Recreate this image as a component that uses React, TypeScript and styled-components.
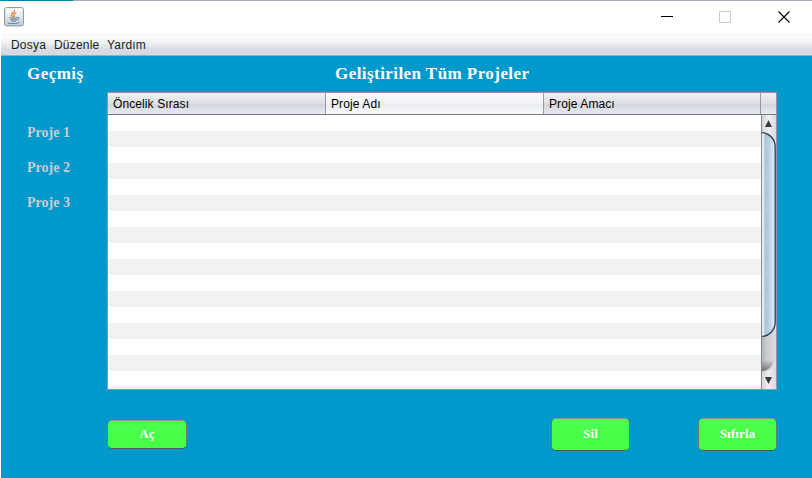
import React from 'react';
import styled, { createGlobalStyle } from 'styled-components';

const GlobalStyle = createGlobalStyle`
  * { box-sizing: border-box; }
  body { margin: 0; overflow: hidden; }
`;

const Window = styled.div`
  width: 812px;
  height: 478px;
  display: flex;
  flex-direction: column;
  background: #fff;
  font-family: "Liberation Sans", Arial, sans-serif;
`;

const TopEdge = styled.div`
  height: 1px;
  flex: none;
  background: linear-gradient(to right, #0080ad 73px, #a3adbc 73px);
`;

const TitleBar = styled.header`
  height: 32px;
  flex: none;
  display: flex;
  align-items: flex-start;
  justify-content: space-between;
  padding: 6px 21px 0 4px;
`;

const Controls = styled.div`
  display: flex;
  gap: 46px;
  padding-top: 4px;
`;

const MenuBar = styled.nav`
  height: 23px;
  flex: none;
  display: flex;
  gap: 8px;
  margin-left: 1px;
  padding-left: 10px;
  border-bottom: 1px solid #a1a9b5;
  background: linear-gradient(#f9f9fa, #fafafa 25%, #ebedf0 50%, #d9dbe2 72%, #d6d9df);
`;

const MenuItem = styled.span<{ $width: number }>`
  width: ${(p) => p.$width}px;
  font-size: 12px;
  line-height: 24px;
  letter-spacing: 0.2px;
  white-space: nowrap;
  color: #1c1c20;
`;

const Content = styled.main`
  flex: 1;
  margin-left: 1px;
  display: grid;
  grid-template-columns: 80px 670px;
  column-gap: 0;
  padding-left: 26px;
  background: #0099cc;
`;

const Sidebar = styled.aside`
  display: flex;
  flex-direction: column;
  font-family: "Liberation Serif", "Times New Roman", serif;
  font-weight: bold;
`;

const Heading = styled.h1`
  margin: 0;
  padding-top: 7px;
  height: 36px;
  font: bold 17px/21px "Liberation Serif", "Times New Roman", serif;
  letter-spacing: 0.44px;
  color: #fff;
  white-space: nowrap;
`;

const TableHeading = styled(Heading)`
  padding-left: 228px;
`;

const History = styled.ul`
  list-style: none;
  margin: 31px 0 0;
  padding: 0;
`;

const HistoryItem = styled.li`
  height: 35px;
  font-size: 14px;
  line-height: 20px;
  color: #cccccc;
`;

const Table = styled.section`
  width: 670px;
  height: 298px;
  border: 1px solid #8f97a5;
  display: flex;
  flex-direction: column;
  background: #fff;
`;

const TableHead = styled.div`
  height: 22px;
  flex: none;
  display: grid;
  grid-template-columns: 218px 218px 217px 15px;
  border-bottom: 1px solid #75797f;
`;

const HeadCell = styled.div<{ $light?: boolean }>`
  padding-left: 5px;
  border-right: 1px solid #969aa3;
  font-size: 12px;
  line-height: 22px;
  height: 21px;
  letter-spacing: 0.1px;
  color: #000;
  background: ${(p) =>
    p.$light
      ? 'linear-gradient(#fbfbfc, #f2f3f7 48%, #eaebf0 56%, #fafbff)'
      : 'linear-gradient(#f1f1f3, #dfe0e5 48%, #d4d6dc 56%, #e9ebf2)'};
  &:last-child { border-right: 0; }
`;

const TableBody = styled.div`
  flex: 1;
  display: flex;
`;

const Rows = styled.div`
  width: 653px;
  background: repeating-linear-gradient(#fff 0 16px, #f2f2f2 16px 32px);
`;

const ActionBar = styled.footer`
  display: flex;
  align-items: flex-start;
  padding-top: 28px;
`;

const Button = styled.button<{ $height: number; $left?: number; $top?: number }>`
  width: ${(p) => (p.$height === 29 ? 80 : 79)}px;
  height: ${(p) => p.$height}px;
  margin: ${(p) => p.$top ?? 0}px 0 0 ${(p) => p.$left ?? 0}px;
  padding: 0 0 1px;
  border: 1px solid;
  border-color: #7f998f #5e8570 #455e58 #5e8570;
  border-radius: 5px;
  background: linear-gradient(#51ff51, #45ff45 55%, #48ff48);
  color: #fff;
  font: bold 13px/16px "Liberation Serif", "Times New Roman", serif;
  font-variant-ligatures: none;
  letter-spacing: 0.15px;
`;

const JavaIcon = () => (
  <svg width="20" height="20" viewBox="0 0 20 20" fill="none">
    <defs>
      <linearGradient id="tile" x1="0" y1="0" x2="0" y2="1">
        <stop stopColor="#fff" />
        <stop offset="1" stopColor="#c7cdd3" />
      </linearGradient>
    </defs>
    <rect x=".6" y=".6" width="18.8" height="18.3" rx="2" fill="url(#tile)" stroke="#8195a5" />
    <path d="M10.5 3C11 5.3 7 6 7.4 8c.2 1 1.6 1.7 1.5 2.3M12.3 5.5c-3 1.2-2.8 2.2-2 3.4.4.7-.2 1.1-.8 1.6" stroke="#e88135" strokeWidth="1.3" />
    <path d="M5.5 10.5c2 .9 6 .8 8 0M6.3 12c1.4 1 5 .9 6.6.2M7 13.7c1.7.8 4 .7 5.2.1M13.5 10.6c2.4-.8 2.1 2-.5 2.5M4 15.1c-1.8 2 10 2 11.5.1" stroke="#527ea3" strokeWidth="1" />
  </svg>
);

const ScrollBar = () => (
  <svg width="15" height="274" viewBox="0 0 15 274">
    <defs>
      <linearGradient id="track">
        <stop stopColor="#aeb0b5" />
        <stop offset=".35" stopColor="#c8cacf" />
        <stop offset="1" stopColor="#dcdde1" />
      </linearGradient>
      <linearGradient id="arrow">
        <stop stopColor="#d0d2d8" />
        <stop offset=".5" stopColor="#eeeff2" />
        <stop offset="1" stopColor="#d9dbe1" />
      </linearGradient>
      <linearGradient id="thumb">
        <stop stopColor="#edf4fa" />
        <stop offset=".18" stopColor="#dce9f4" />
        <stop offset=".28" stopColor="#abc4d9" />
        <stop offset=".55" stopColor="#b8d0e2" />
        <stop offset="1" stopColor="#dfeff9" />
      </linearGradient>
      <linearGradient id="shade" x1="0" y1="0" x2="0" y2="1">
        <stop stopColor="#666" stopOpacity="0" />
        <stop offset="1" stopColor="#555" stopOpacity=".75" />
      </linearGradient>
    </defs>
    <path d="M0 0h15v274H0z" fill="url(#track)" />
    <path d="M0 0h15v25Q11 17 0 17z" fill="url(#arrow)" />
    <path d="M0 245h13Q10 256 0 256z" fill="url(#shade)" />
    <path d="M0 257Q11 257 15 247v27H0z" fill="url(#arrow)" />
    <path d="M0 17.5C8 17.5 14.2 24 14.2 32v175c0 8-6.2 14.5-14.2 14.5z" fill="url(#thumb)" />
    <path d="M0 17.5C8 17.5 14.2 24 14.2 32v175c0 8-6.2 14.5-14.2 14.5" fill="none" stroke="#273b50" strokeWidth="1.3" />
    <path d="M.5 0v274" stroke="#858990" />
    <path d="M4 12h7L7.5 5zM4 262h7l-3.5 7z" fill="#3a3a3d" />
  </svg>
);

const menus = [
  { label: 'Dosya', width: 35 },
  { label: 'Düzenle', width: 45 },
  { label: 'Yardım', width: 40 },
];

export default function App() {
  return (
    <Window>
      <GlobalStyle />
      <TopEdge />
      <TitleBar>
        <JavaIcon />
        <Controls>
          <svg width="13" height="13"><path d="M1 5.5h12" stroke="#000" /></svg>
          <svg width="13" height="13"><path d="M.5.5h11v11H.5z" fill="none" stroke="#ccc" /></svg>
          <svg width="13" height="13"><path d="M.5.5l11 11m0-11l-11 11" stroke="#000" strokeWidth="1.1" /></svg>
        </Controls>
      </TitleBar>
      <MenuBar>
        {menus.map((m) => <MenuItem key={m.label} $width={m.width}>{m.label}</MenuItem>)}
      </MenuBar>
      <Content>
        <Sidebar>
          <Heading>Geçmiş</Heading>
          <History>
            {['Proje 1', 'Proje 2', 'Proje 3'].map((p) => <HistoryItem key={p}>{p}</HistoryItem>)}
          </History>
        </Sidebar>
        <div>
          <TableHeading>Geliştirilen Tüm Projeler</TableHeading>
          <Table>
            <TableHead>
              <HeadCell>Öncelik Sırası</HeadCell>
              <HeadCell $light>Proje Adı</HeadCell>
              <HeadCell>Proje Amacı</HeadCell>
              <HeadCell />
            </TableHead>
            <TableBody>
              <Rows />
              <ScrollBar />
            </TableBody>
          </Table>
          <ActionBar>
            <Button $height={29} $top={2}>Aç</Button>
            <Button $height={33} $left={364}>Sil</Button>
            <Button $height={33} $left={68}>Sıfırla</Button>
          </ActionBar>
        </div>
      </Content>
    </Window>
  );
}
